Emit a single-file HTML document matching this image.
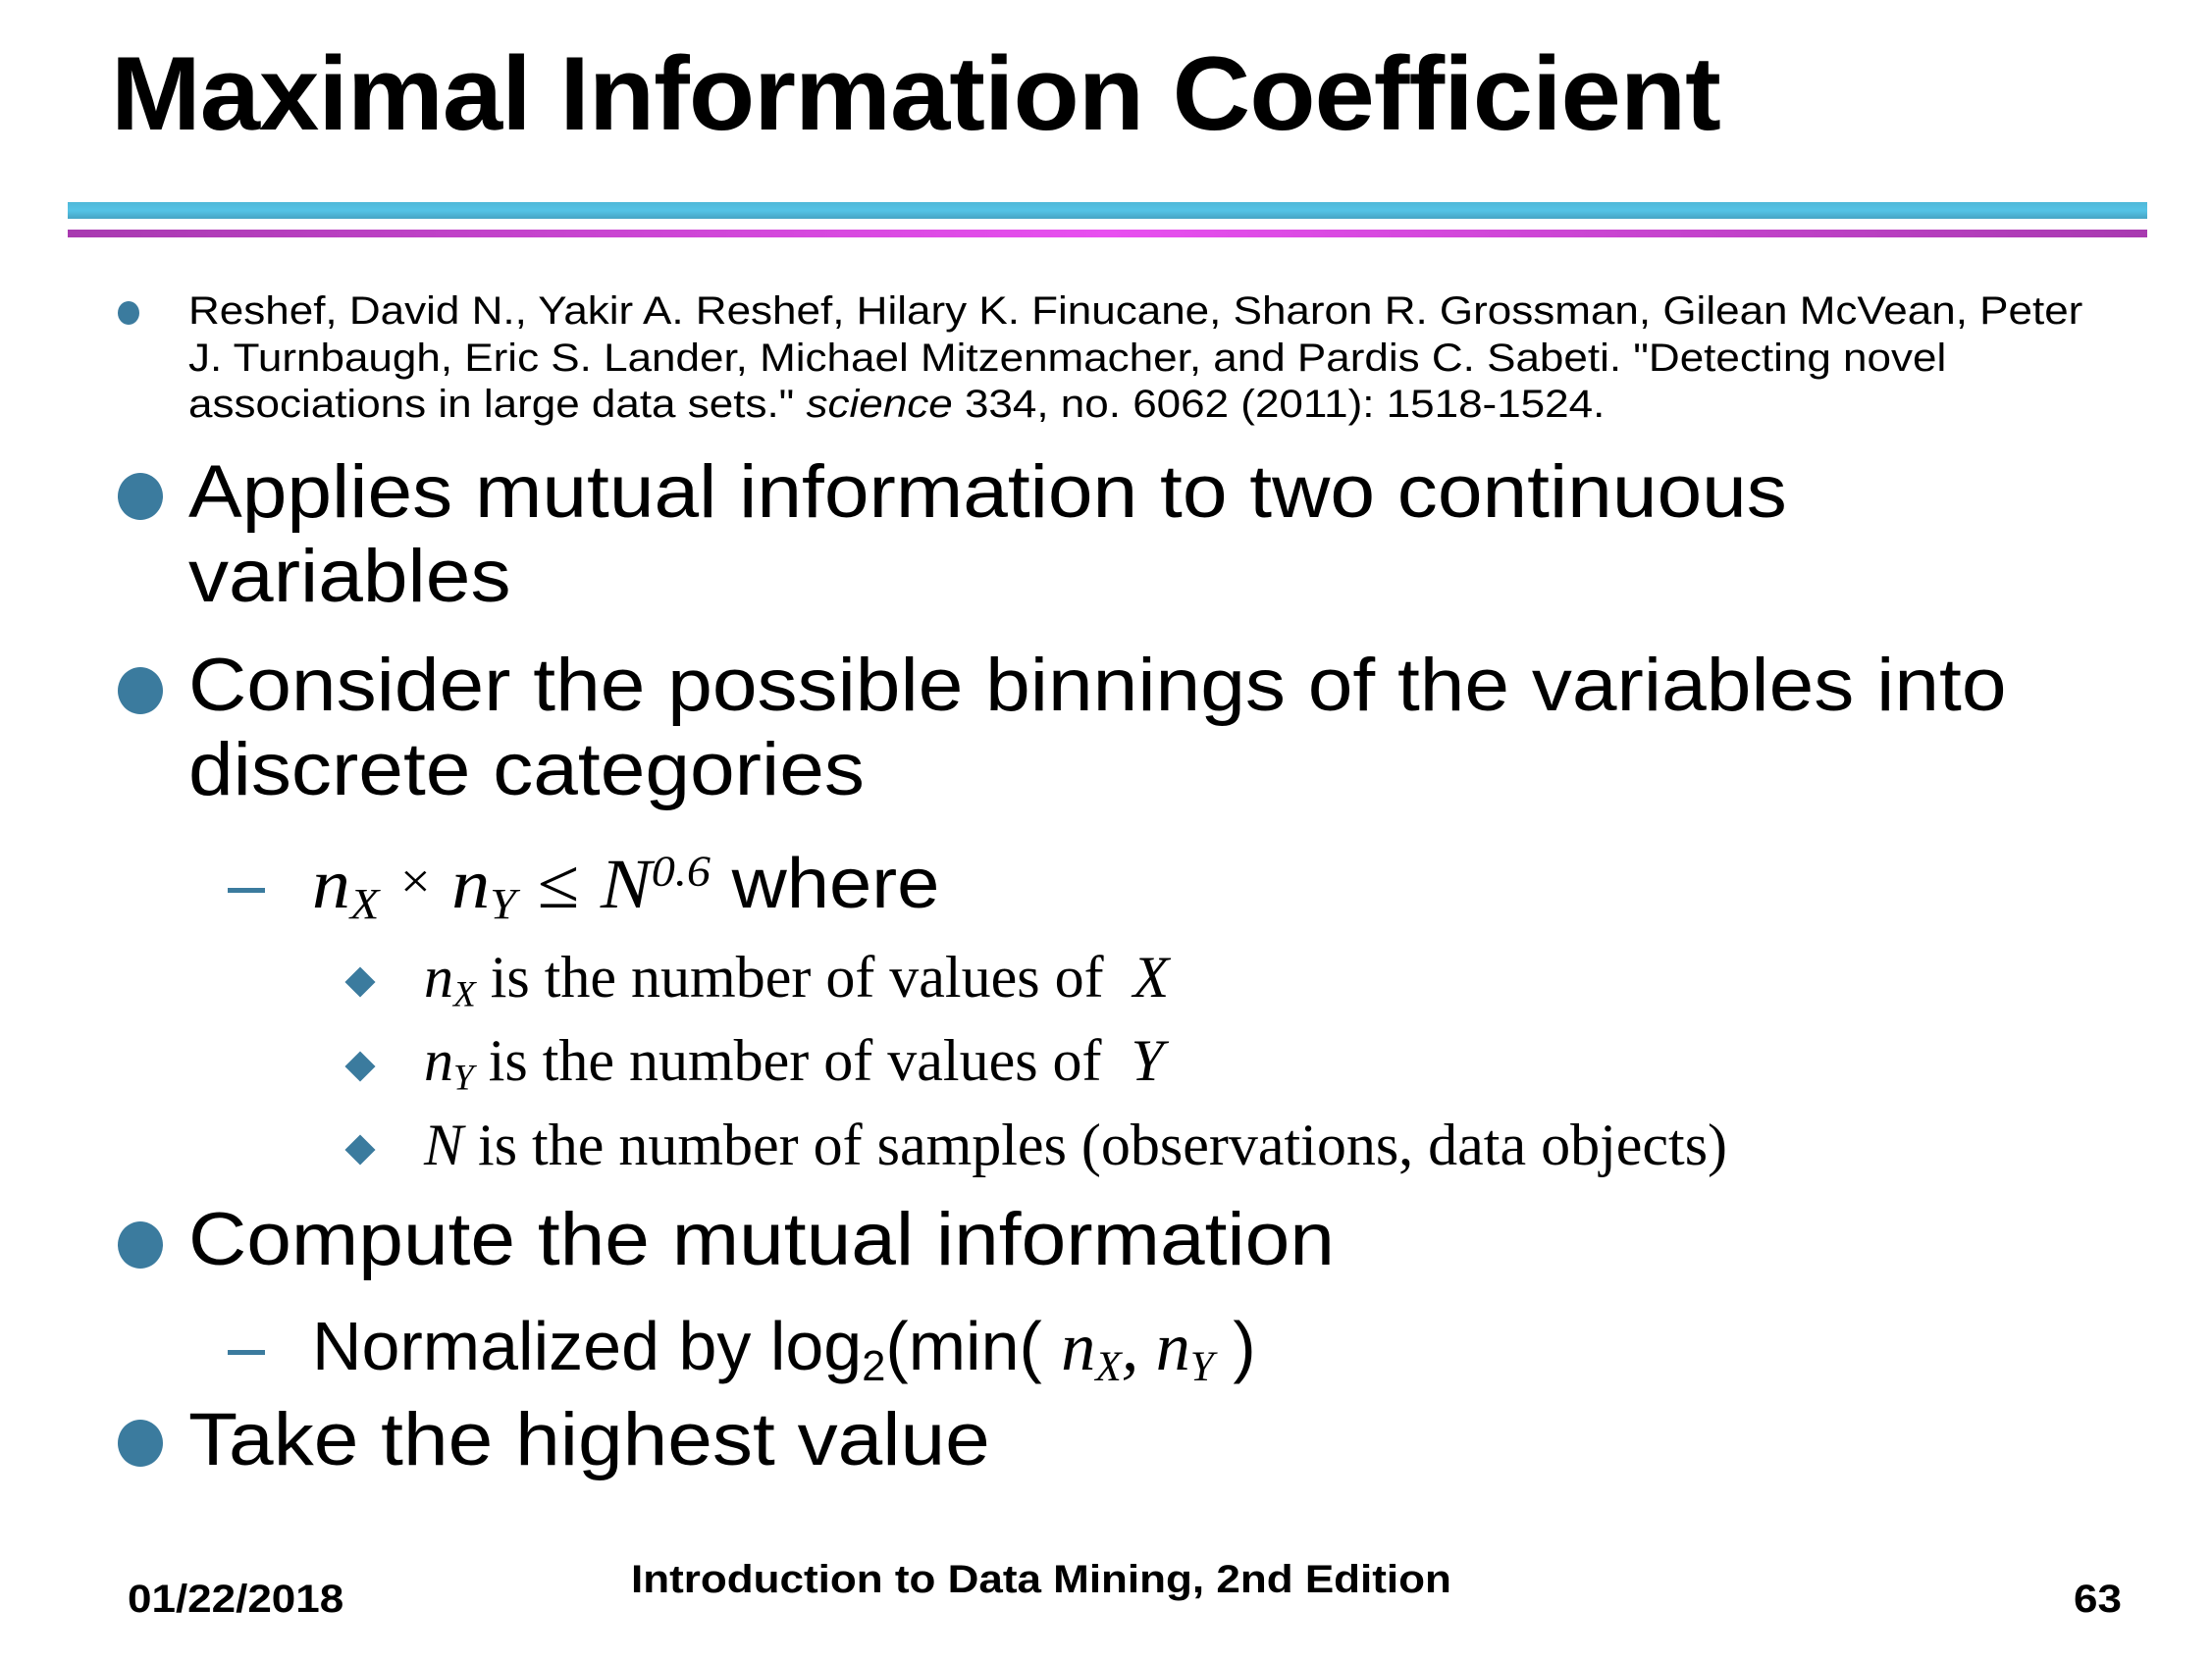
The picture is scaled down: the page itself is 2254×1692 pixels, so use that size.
<!DOCTYPE html>
<html><head><meta charset="utf-8"><style>
body{margin:0;width:2254px;height:1692px;background:#fff;position:relative;overflow:hidden;font-family:"Liberation Sans",Arial,sans-serif;color:#000}
.a{position:absolute;white-space:nowrap;transform-origin:0 0}
.s{font-size:76px;line-height:76px;transform:scaleX(1.08)}
.c{font-size:40px;line-height:40px;transform:scaleX(1.1)}
.sub{font-size:72px;line-height:72px;transform:scaleX(1.08)}
.t{font-family:"Liberation Serif",serif;font-size:60px;line-height:60px}
.m{font-family:"Liberation Serif",serif;font-style:italic}
.dot{position:absolute;border-radius:50%;background:#3b7b9e}
.dia{position:absolute;width:22px;height:22px;background:#3b7b9e;transform:rotate(45deg)}
.dash{position:absolute;width:38px;height:5px;background:#3b7b9e}
.f{font-weight:bold;font-size:40px;line-height:40px;transform:scaleX(1.1)}
sub{font-size:0.62em;vertical-align:-0.25em;line-height:0}
sup{font-size:0.62em;vertical-align:0.5em;line-height:0}
</style></head><body>
<div class="a" style="left:113px;top:42px;font-weight:bold;font-size:107px;line-height:107px;transform:scaleX(1.03);letter-spacing:-1px">Maximal Information Coefficient</div>
<div style="position:absolute;left:69px;top:206px;width:2119px;height:17px;background:linear-gradient(#4fb8d8,#55c3e6 50%,#46a4c4)"></div>
<div style="position:absolute;left:69px;top:234px;width:2119px;height:8px;background:linear-gradient(90deg,#a83ab0,#e84ff0 50%,#a83ab0)"></div>

<div class="dot" style="left:120px;top:307px;width:22px;height:24px"></div>
<div class="a c" style="left:192px;top:297px">Reshef, David N., Yakir A. Reshef, Hilary K. Finucane, Sharon R. Grossman, Gilean McVean, Peter</div>
<div class="a c" style="left:192px;top:345px">J. Turnbaugh, Eric S. Lander, Michael Mitzenmacher, and Pardis C. Sabeti. "Detecting novel</div>
<div class="a c" style="left:192px;top:392px">associations in large data sets." <i>science</i> 334, no. 6062 (2011): 1518-1524.</div>

<div class="dot" style="left:120px;top:482px;width:46px;height:48px"></div>
<div class="a s" style="left:192px;top:464px">Applies mutual information to two continuous</div>
<div class="a s" style="left:192px;top:550px">variables</div>
<div class="dot" style="left:120px;top:680px;width:46px;height:48px"></div>
<div class="a s" style="left:192px;top:661px">Consider the possible binnings of the variables into</div>
<div class="a s" style="left:192px;top:747px">discrete categories</div>

<div class="dash" style="left:232px;top:905px"></div>
<div class="a sub" style="left:318px;top:862px"><span class="m">n<sub>X</sub></span> <span style="font-family:'Liberation Serif',serif;font-size:0.7em;vertical-align:0.2em">×</span> <span class="m">n<sub>Y</sub></span> <span style="font-family:'Liberation Serif',serif">≤</span> <span class="m">N<sup>0.6</sup></span> where</div>

<div class="dia" style="left:356px;top:990px"></div>
<div class="a t" style="left:432px;top:966px"><i>n<sub>X</sub></i> is the number of values of &nbsp;<i>X</i></div>
<div class="dia" style="left:356px;top:1076px"></div>
<div class="a t" style="left:432px;top:1051px"><i>n<sub>Y</sub></i> is the number of values of &nbsp;<i>Y</i></div>
<div class="dia" style="left:356px;top:1161px"></div>
<div class="a t" style="left:432px;top:1137px"><i>N</i> is the number of samples (observations, data objects)</div>

<div class="dot" style="left:120px;top:1245px;width:46px;height:48px"></div>
<div class="a s" style="left:192px;top:1226px">Compute the mutual information</div>
<div class="dash" style="left:232px;top:1376px"></div>
<div class="a sub" style="left:318px;top:1336px;font-size:70px;transform:scaleX(1.0)">Normalized by log<sub>2</sub>(min( <span class="m">n<sub>X</sub>, n<sub>Y</sub></span> )</div>
<div class="dot" style="left:120px;top:1447px;width:46px;height:48px"></div>
<div class="a s" style="left:192px;top:1430px">Take the highest value</div>

<div class="a f" style="left:130px;top:1610px">01/22/2018</div>
<div class="a f" style="left:643px;top:1590px">Introduction to Data Mining, 2nd Edition</div>
<div class="a f" style="left:2113px;top:1610px">63</div>
</body></html>
